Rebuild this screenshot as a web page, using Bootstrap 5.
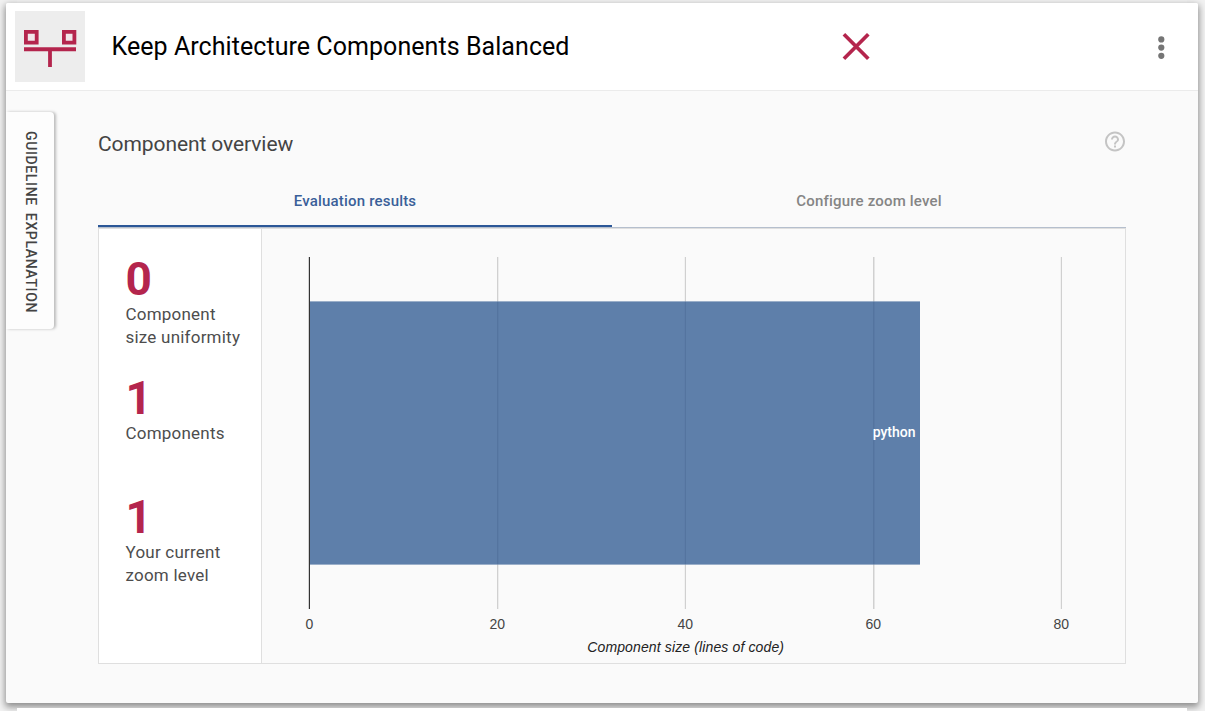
<!DOCTYPE html>
<html lang="en">
<head>
<meta charset="utf-8">
<meta name="viewport" content="width=device-width, initial-scale=1">
<title>Keep Architecture Components Balanced</title>
<link href="https://cdn.jsdelivr.net/npm/bootstrap@5.3.0/dist/css/bootstrap.min.css" rel="stylesheet">
<style>
  html, body { height: 100%; }
  body { background: #f2f2f2; font-family: Roboto, "Liberation Sans", sans-serif; color: #444; overflow: hidden; }
  .neighbour { margin: 0 18px 0 17px; background: #fff; flex: none; }
  .neighbour-top { height: 3px; background: #f4f4f4; }
  .neighbour-bottom { height: 3px; margin-top: 5px; position: relative; z-index: 1; }
  .guideline { margin: 0 7px 0 6px; height: 700px; border: 0; border-radius: 2px; background: #fafafa;
    box-shadow: 0 3px 7px 1px rgba(0,0,0,.42); flex: none; }
  .guideline-head { height: 88px; background: #fff; border-bottom: 1px solid #ebebeb; border-radius: 2px 2px 0 0; padding-left: 9px; }
  .guideline-icon { width: 70px; height: 71px; background: #ededed; margin-top: 8px; }
  .guideline-title { font-size: 25px; line-height: 30px; font-weight: 400; color: #000; margin: 29px 0 0 26.5px; width: 730.5px; letter-spacing: .06px; }
  .verdict { margin-top: 30px; width: 28px; height: 27px; }
  .menu-btn { margin: 32px 33px 0 auto; width: 8px; height: 26px; }
  .side-tab { width: 48px; height: 217px; margin-top: 21px; background: #fdfdfd; border-radius: 0 4px 4px 0;
    box-shadow: 2px 0 3px rgba(0,0,0,.25); flex: none; }
  .side-tab span { writing-mode: vertical-rl; font-size: 14px; font-weight: 500; line-height: 20px; letter-spacing: .63px; word-spacing: 3px; white-space: nowrap; margin: 3px 0 0 1px; }
  .overview { width: 1028px; margin-left: 44px; }
  .overview-title { font-size: 21px; font-weight: 400; line-height: 26px; margin: 40px 0 0; color: #444; letter-spacing: -.09px; }
  .help-icon { margin-top: 39px; }
  .tabs-row { height: 48px; margin-top: 23px; border-bottom: 1px solid #b5bfcd; }
  .tabs-row .nav-link { height: 48px; padding: 11px 0 0; font-size: 15px; line-height: 20px; font-weight: 500; color: #858585; border-radius: 0; letter-spacing: .19px; }
  .tabs-row .nav-link.active { color: #3a5f99; height: 47px; border-bottom: 2px solid #2b5797; }
  .results { height: 436px; border: 1px solid #dfdfdf; }
  .metrics { width: 163px; background: #fff; border-right: 1px solid #dfdfdf; padding: 27px 0 0 26.5px; flex: none; }
  .metric { height: 119px; }
  .metric-value { font-size: 46px; line-height: 46px; height: 47px; font-weight: 700; color: #b4254d; }
  .metric-label { font-size: 17px; line-height: 23px; color: #4d4d4d; white-space: nowrap; letter-spacing: .22px; }
  .chart-text { font: 14px "Liberation Sans", Arial, sans-serif; fill: #444; text-anchor: middle; }
  .axis-title { font-style: italic; fill: #222; letter-spacing: .13px; }
  .bar-label { font: 500 14px Roboto, sans-serif; fill: #fff; text-anchor: end; }
</style>
</head>
<body class="d-flex flex-column">
  <div class="neighbour neighbour-top"></div>
  <main class="card guideline">
    <header class="guideline-head d-flex align-items-start">
      <div class="guideline-icon">
        <svg width="70" height="71" viewBox="0 0 70 71" class="d-block" fill="none" stroke="#b4254d">
          <path d="M10.900 20.900h10.800v10.800H10.900zM48.900 20.900h10.500v10.800H48.900z" stroke-width="3.8" fill="#f1e6ea"/>
          <path d="M9 38.300h52" stroke-width="3.9"/><path d="M35 38v18" stroke-width="3.8"/>
        </svg>
      </div>
      <h1 class="guideline-title">Keep Architecture Components Balanced</h1>
      <svg class="verdict" viewBox="0 0 28 27" stroke="#b4254d" stroke-width="3.7"><path d="M1.900 1.300l24.400 24.400M26.300 1.300L1.900 25.700"/></svg>
      <svg class="menu-btn" viewBox="0 0 8 26" fill="#757575"><circle cx="4.300" cy="4.400" r="3.100"/><circle cx="4.300" cy="12.600" r="3.100"/><circle cx="4.300" cy="20.800" r="3.100"/></svg>
    </header>
    <div class="d-flex">
      <aside class="side-tab d-flex align-items-center justify-content-center"><span>GUIDELINE EXPLANATION</span></aside>
      <section class="overview">
        <div class="d-flex justify-content-between align-items-start">
          <h2 class="overview-title">Component overview</h2>
          <svg class="help-icon" width="22" height="22" viewBox="1 .6 22 22" fill="#c4c4c4"><path d="M11 18h2v-2h-2v2zm1-16C6.480 2 2 6.480 2 12s4.480 10 10 10 10-4.480 10-10S17.520 2 12 2zm0 18c-4.410 0-8-3.590-8-8s3.590-8 8-8 8 3.590 8 8-3.590 8-8 8zm0-14c-2.210 0-4 1.790-4 4h2c0-1.100.9-2 2-2s2 .9 2 2c0 2-3 1.750-3 5h2c0-2.250 3-2.500 3-5 0-2.210-1.790-4-4-4z"/></svg>
        </div>
        <nav class="nav nav-fill tabs-row flex-nowrap">
          <a class="nav-link active w-50" href="#">Evaluation results</a>
          <a class="nav-link w-50" href="#">Configure zoom level</a>
        </nav>
        <div class="results d-flex">
          <div class="metrics">
            <div class="metric"><div class="metric-value">0</div><div class="metric-label">Component<br>size uniformity</div></div>
            <div class="metric"><div class="metric-value">1</div><div class="metric-label">Components</div></div>
            <div class="metric"><div class="metric-value">1</div><div class="metric-label">Your current<br>zoom level</div></div>
          </div>
          <svg width="863" height="434" viewBox="262 229 863 434" class="d-block flex-shrink-0">
            <g fill="#d0d0d0">
              <rect x="497" y="257" width="1.300" height="352"/><rect x="684.800" y="257" width="1.200" height="352"/>
              <rect x="873" y="257" width="1.500" height="352"/><rect x="1060.800" y="257" width="1.200" height="352"/>
            </g>
            <rect x="309" y="301.400" width="611" height="263.200" fill="#5e7faa"/>
            <g fill="#54749f">
              <rect x="497" y="302" width="1.300" height="262"/><rect x="684.800" y="302" width="1.200" height="262"/><rect x="873" y="302" width="1.500" height="262"/>
            </g>
            <rect x="308.800" y="257" width="1.200" height="352" fill="#333"/>
            <text x="915.500" y="437" class="bar-label">python</text>
            <g class="chart-text">
              <text x="309.500" y="629">0</text><text x="497.300" y="629">20</text><text x="685.300" y="629">40</text><text x="873.300" y="629">60</text><text x="1061.300" y="629">80</text>
            </g>
            <text x="685.700" y="652" class="chart-text axis-title">Component size (lines of code)</text>
          </svg>
        </div>
      </section>
    </div>
  </main>
  <div class="neighbour neighbour-bottom"></div>
<script src="https://cdn.jsdelivr.net/npm/bootstrap@5.3.0/dist/js/bootstrap.bundle.min.js"></script>
</body>
</html>
